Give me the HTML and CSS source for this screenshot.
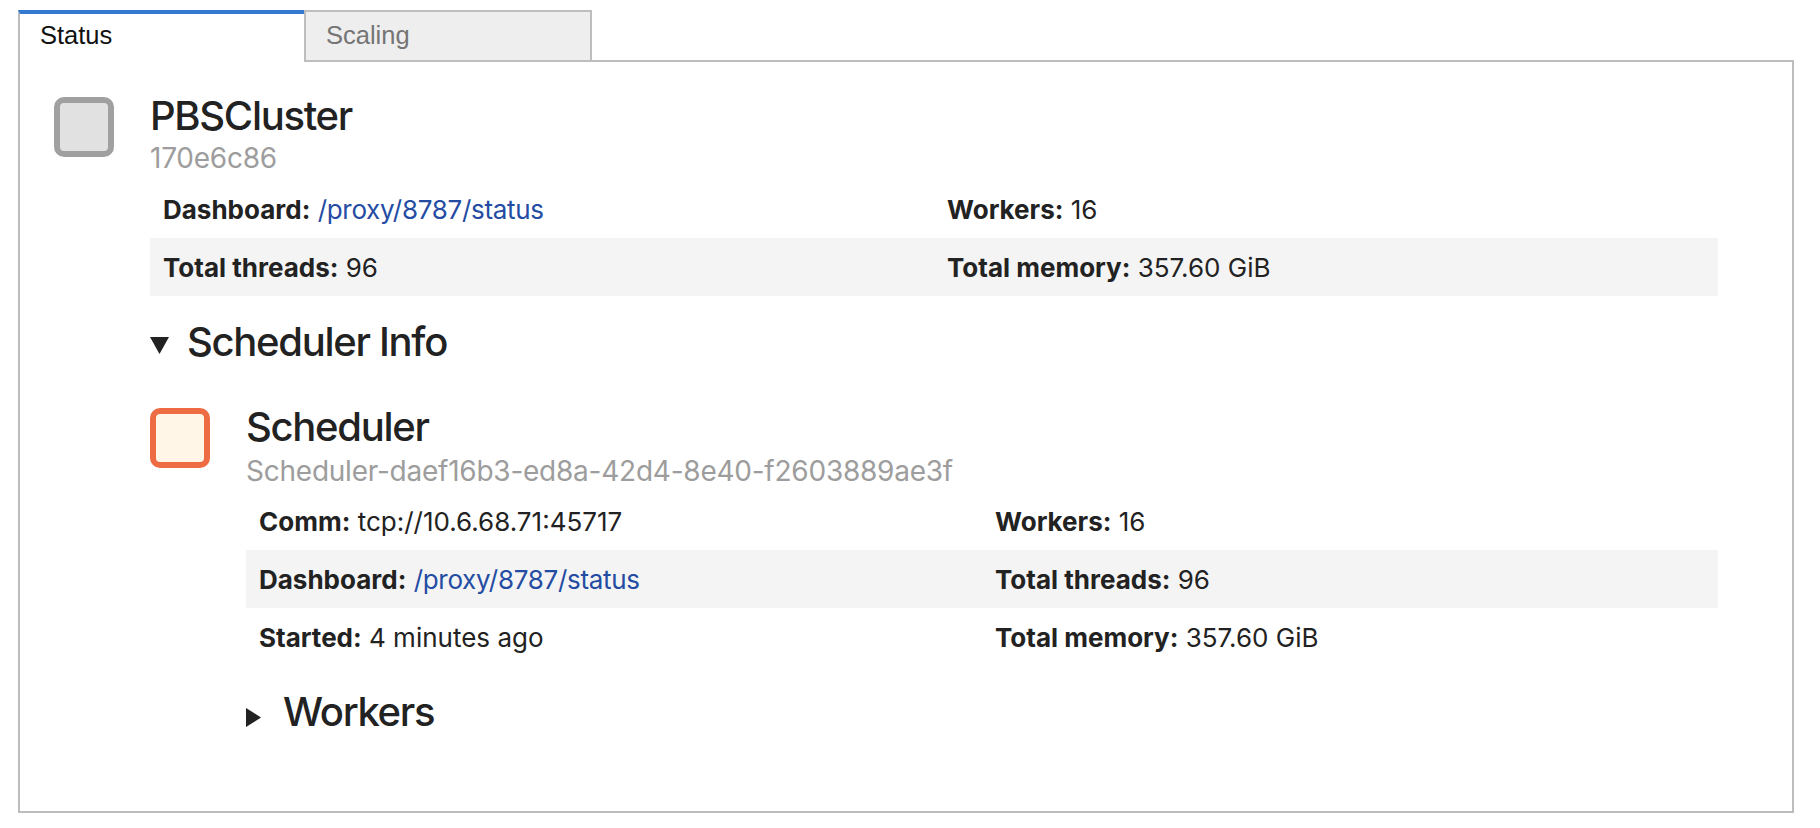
FILE: index.html
```html
<!DOCTYPE html>
<html lang="en">
<head>
<meta charset="utf-8">
<title>PBSCluster</title>
<link rel="stylesheet" href="styles.css">
</head>
<body>
<div class="page">
  <div class="tabbar">
    <div class="tab tab-current">Status</div>
    <div class="tab">Scaling</div>
  </div>
  <div class="panel">
    <div class="entity">
      <div class="badge badge-cluster"></div>
      <div class="entity-body">
        <h3 class="title">PBSCluster</h3>
        <p class="subtitle">170e6c86</p>
        <table class="info info-cluster">
          <tr>
            <td><strong>Dashboard:</strong> <a href="/proxy/8787/status">/proxy/8787/status</a></td>
            <td><strong>Workers:</strong> 16</td>
          </tr>
          <tr>
            <td><strong>Total threads:</strong> 96</td>
            <td><strong>Total memory:</strong> 357.60 GiB</td>
          </tr>
        </table>
        <details class="section" open>
          <summary class="section-head">
            <span class="marker"><svg class="tri-down" width="19" height="17" viewBox="0 0 19 17"><path d="M0 0H19L9.5 17Z" fill="#222"/></svg></span>
            <h3 class="title">Scheduler Info</h3>
          </summary>
          <div class="entity entity-scheduler">
            <div class="badge badge-scheduler"></div>
            <div class="entity-body">
              <h3 class="title">Scheduler</h3>
              <p class="subtitle subtitle-scheduler">Scheduler-daef16b3-ed8a-42d4-8e40-f2603889ae3f</p>
              <table class="info info-scheduler">
                <tr>
                  <td><strong>Comm:</strong> tcp://10.6.68.71:45717</td>
                  <td><strong>Workers:</strong> 16</td>
                </tr>
                <tr>
                  <td><strong>Dashboard:</strong> <a href="/proxy/8787/status">/proxy/8787/status</a></td>
                  <td><strong>Total threads:</strong> 96</td>
                </tr>
                <tr>
                  <td><strong>Started:</strong> 4 minutes ago</td>
                  <td><strong>Total memory:</strong> 357.60 GiB</td>
                </tr>
              </table>
              <details class="section section-workers">
                <summary class="section-head">
                  <span class="marker"><svg class="tri-right" width="15" height="19" viewBox="0 0 15 19"><path d="M0 0L15 9.5L0 19Z" fill="#222"/></svg></span>
                  <h3 class="title">Workers</h3>
                </summary>
              </details>
            </div>
          </div>
        </details>
      </div>
    </div>
  </div>
</div>
</body>
</html>
```
FILE: styles.css
```css
html, body {
  margin: 0;
  padding: 0;
  background: #ffffff;
}

.page {
  padding: 10px 0 0 18px;
  font-family: Inter, "Noto Sans", sans-serif;
  color: #222222;
}

/* Tabs */
.tabbar {
  position: relative;
  z-index: 1;
  display: flex;
  align-items: flex-start;
  height: 52px;
  margin-bottom: -2px;
  font-family: "Liberation Sans", Arial, sans-serif;
  font-size: 25.5px;
}

.tab {
  box-sizing: border-box;
  width: 288px;
  height: 50px;
  padding: 0 20px 2px;
  border: 2px solid #bdbdbd;
  border-bottom: none;
  background: #eeeeee;
  color: #757575;
  line-height: 46px;
  white-space: nowrap;
}

.tab + .tab {
  margin-left: -2px;
}

.tab-current {
  height: 52px;
  border-top: 4px solid #3478cf;
  background: #ffffff;
  color: #111111;
  line-height: 42px;
  padding-bottom: 6px;
}

/* Panel */
.panel {
  box-sizing: border-box;
  width: 1776px;
  height: 753px;
  border: 2px solid #bdbdbd;
  padding: 35px 74px 0 34px;
}

.entity {
  display: flex;
  align-items: flex-start;
  gap: 36px;
}

.entity-body {
  flex: 1;
  min-width: 0;
}

.badge {
  box-sizing: border-box;
  flex: 0 0 60px;
  width: 60px;
  height: 60px;
  border-radius: 10px;
  border: 6px solid #a0a0a0;
  background: #e1e1e1;
}

.badge-scheduler {
  border-color: #ee6c44;
  background: #fff6e8;
}

.title {
  margin: 0;
  font-size: 40px;
  font-weight: 500;
  line-height: 38px;
  letter-spacing: -1.3px;
  color: #222222;
  white-space: nowrap;
}

.subtitle {
  margin: 6px 0 0;
  font-size: 28px;
  line-height: 34px;
  letter-spacing: -0.24px;
  color: #9d9d9d;
  white-space: nowrap;
}

.subtitle-scheduler {
  margin-top: 8px;
}

/* Info tables */
.info {
  width: 100%;
  border-collapse: collapse;
  border-spacing: 0;
  font-size: 26px;
  line-height: 32px;
  color: #222222;
}

.info-cluster {
  margin-top: 5px;
}

.info-scheduler {
  margin-top: 4px;
}

.info td {
  width: 50%;
  padding: 14px 13px 12px;
  text-align: left;
  vertical-align: middle;
  white-space: nowrap;
}

.info tr:nth-child(even) {
  background: #f4f4f4;
}

.info strong {
  font-weight: 700;
}

.info a {
  color: #244ca3;
  text-decoration: none;
  letter-spacing: -0.3px;
}

/* Collapsible sections */
.section {
  margin-top: 27px;
}

.section-head {
  display: flex;
  align-items: flex-start;
  list-style: none;
  cursor: pointer;
}

.section-head::-webkit-details-marker {
  display: none;
}

.marker {
  flex: 0 0 37px;
  width: 37px;
  display: flex;
}

.tri-down {
  margin-top: 14px;
}

.tri-right {
  margin-top: 15px;
}

.entity-scheduler {
  margin-top: 47px;
}
```
